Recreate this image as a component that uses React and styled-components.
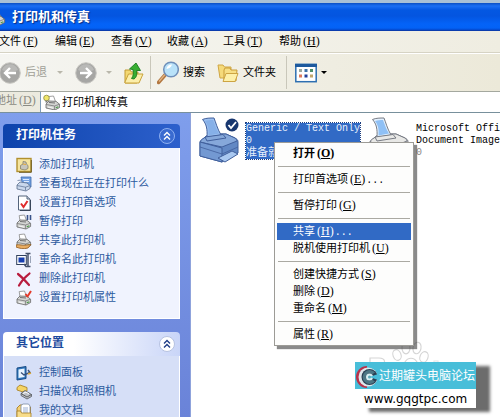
import React from "react";
import styled, { createGlobalStyle, css } from "styled-components";

const Global = createGlobalStyle`
  * { box-sizing: border-box; }
  html, body { margin: 0; overflow: hidden; }
  body, button, input {
    font-family: "Liberation Mono", "Noto Sans CJK SC", monospace;
    font-size: 11px;
    line-height: 16px;
    color: #000;
  }
  button { border: 0; padding: 0; margin: 0; background: none; white-space: nowrap; }
  svg { display: block; flex: none; }
`;

/* ---------- window frame ---------- */

const Window = styled.main`
  height: 100vh;
  display: flex;
  flex-direction: column;
  overflow: hidden;
  border-top: 3px solid #a9c2d6;
  background: #fff;
`;

const TitleBar = styled.header`
  flex: none;
  height: 28px;
  display: flex;
  align-items: center;
  gap: 6px;
  padding-top: 2px;
  overflow: hidden;
  border-bottom: 1px solid #0a3cae;
  background: linear-gradient(#0a50c4 0, #1a70f4 3px, #0458e2 7px, #0455e0 13px, #0463f8 21px, #0362f6 25px, #0448cc 27px);
`;

const TitleIcon = styled.span`
  margin-left: -10px;
`;

const Title = styled.h1`
  margin: 0;
  color: #fff;
  font-size: 13px;
  line-height: 20px;
  font-weight: 700;
  text-shadow: 1px 1px 1px #0b2d80;
`;

const MenuBar = styled.nav`
  flex: none;
  height: 22px;
  display: flex;
  overflow: hidden;
  margin-left: -9px;
  border-bottom: 1px solid #d6d3c4;
  background: linear-gradient(90deg, #f6f6f2, #efede1);
`;

const MenuButton = styled.button`
  flex: none;
  min-width: 56px;
  padding: 0 0 0 8px;
  text-align: left;
`;

const Key = styled.span`
  margin-left: 2px;
  font-family: "Liberation Serif", serif;
  font-size: 12px;
  line-height: 12px;
`;

const Dots = styled.span`
  margin-left: 1px;
  font-size: 10px;
`;

const ToolBar = styled.div`
  flex: none;
  height: 39px;
  display: flex;
  align-items: center;
  padding: 1px 0;
  border-top: 1px solid #fff;
  border-bottom: 1px solid #a4a89f;
  background: linear-gradient(90deg, #f5f5f1, #ece9d9);
`;

const ToolGroup = styled.div`
  height: 33px;
  display: flex;
  flex: none;
  align-items: center;
  gap: 12px;
  padding: 0 ${(p) => p.$end}px 0 ${(p) => p.$start}px;
  margin-left: ${(p) => (p.$clipped ? "-1px" : "0")};
  border-right: ${(p) => (p.$last ? "0" : "1px solid #c9c7ba")};
`;

const ToolButton = styled.button`
  display: flex;
  align-items: center;
  gap: 4px;
  color: ${(p) => (p.disabled ? "#a09f97" : "#000")};
`;

const Caret = styled.span`
  margin-left: ${(p) => p.$gap}px;
  border: 3px solid transparent;
  border-bottom: 0;
  border-top-color: ${(p) => (p.$dim ? "#b9b7ab" : "#000")};
`;

const AddressBar = styled.div`
  flex: none;
  height: 21px;
  display: flex;
  align-items: stretch;
  border-bottom: 1px solid #78909c;
  background: #eceadf;
`;

const AddressLabel = styled.label`
  flex: none;
  margin-left: -5px;
  width: 45px;
  line-height: 19px;
  color: #8b8a82;
`;

const AddressField = styled.div`
  flex: 1;
  min-width: 0;
  display: flex;
  align-items: center;
  gap: 2px;
  padding-left: 2px;
  border-left: 1px solid #7f9db9;
  background: #fff;
`;

const AddressInput = styled.input`
  flex: 1;
  min-width: 0;
  border: 0;
  padding: 1px 0 0;
  outline: 0;
  background: transparent;
`;

const Content = styled.div`
  flex: 1;
  min-height: 0;
  display: flex;
`;

/* ---------- task pane ---------- */

const Sidebar = styled.aside`
  flex: none;
  width: 191px;
  padding: 11px 10px 0 3px;
  overflow: hidden;
  display: flex;
  flex-direction: column;
  gap: 13px;
  border-right: 1px solid #8fa3dc;
  background: linear-gradient(#7f9eec, #6a83d8);
`;

const Card = styled.section`
  flex: none;
  border-radius: 4px 4px 0 0;
  overflow: hidden;
`;

const CardHeader = styled.button`
  width: 100%;
  height: 24px;
  display: flex;
  align-items: center;
  justify-content: space-between;
  padding: 0 4px 0 13px;
  font-size: 12px;
  font-weight: 700;
  ${(p) =>
    p.$primary
      ? css`
          color: #fff;
          background: linear-gradient(90deg, #0d43ac, #2d60cc);
        `
      : css`
          color: #1c4a9e;
          background: linear-gradient(90deg, #fff 40%, #c9d5f8);
        `}
`;

const TaskList = styled.ul`
  list-style: none;
  margin: 0;
  padding: 7px 12px 11px;
  border: 1px solid #fff;
  border-width: 0 1px 1px;
  background: ${(p) => (p.$primary ? "#f0f3fe" : "#d6dff7")};
`;

const TaskLink = styled.a`
  height: 19px;
  display: flex;
  align-items: center;
  gap: 7px;
  color: #2c5a9e;
  text-decoration: none;
  white-space: nowrap;
`;

/* ---------- printers ---------- */

const Files = styled.section`
  position: relative;
  flex: 1;
  min-width: 0;
  display: flex;
  align-items: flex-start;
  padding: 4px 0 0 8px;
  background: #fff;
`;

const Printer = styled.button`
  flex: none;
  width: 170px;
  display: flex;
  align-items: flex-start;
  gap: 7px;
  text-align: left;
`;

const PrinterLabel = styled.span`
  display: block;
  margin-top: 6px;
  font-size: 10px;
  line-height: 12px;
  white-space: nowrap;
  ${(p) =>
    p.$selected &&
    css`
      color: #e6effc;
      background: #316ac5;
      outline: 1px dotted #1d3f80;
    `}
`;

const Line = styled.span`
  display: block;
  color: ${(p) => (p.$dim ? "#8a8a8a" : "inherit")};
  font-size: ${(p) => (p.$wide ? "11px" : "10px")};
`;

const ContextMenu = styled.div`
  position: absolute;
  left: 83px;
  top: 29px;
  width: 140px;
  padding: 2px;
  border: 1px solid #9c9b96;
  background: #fdfdfc;
  box-shadow: 3px 3px 1px rgba(60, 60, 60, 0.6);
`;

const ContextItem = styled.button`
  display: block;
  width: 100%;
  height: 17px;
  padding: 1px 0 0 16px;
  text-align: left;
  line-height: 16px;
  font-weight: ${(p) => (p.$bold ? 700 : 400)};
  color: ${(p) => (p.$active ? "#fff" : "#000")};
  background: ${(p) => (p.$active ? "#316ac5" : "transparent")};
`;

const Divider = styled.hr`
  height: 1px;
  margin: 4px 1px;
  border: 0;
  background: #aaa9a2;
`;

/* ---------- watermark ---------- */

const PawMark = styled.div`
  position: absolute;
  right: 16px;
  bottom: 42px;
`;

const Stamp = styled.aside`
  position: absolute;
  right: 24px;
  bottom: 9px;
  width: 121px;
  background: #fff;
  box-shadow: 14px 4px 3px #6c6c6c;
`;

const StampTitle = styled.div`
  height: 27px;
  display: flex;
  align-items: center;
  gap: 1px;
  padding: 3px 0 0 1px;
  font-size: 12px;
  color: #fff;
  background: #48bed9;
  white-space: nowrap;
`;

const StampUrl = styled.div`
  height: 19px;
  text-align: center;
  font: 12px/20px "DejaVu Sans", sans-serif;
`;

/* ---------- drawings ---------- */

const PrinterBody = ({ hand, tick, doc }) => (
  <g strokeLinejoin="round" strokeWidth=".8">
    <path d="M4 7 3.2 1.6 8.5 1l2 5.6z" fill="#fff" stroke="#888" />
    <path d="m1 9 3-3 7 .3 3.6 3v3.2L10 15 1 13z" fill="#d4d5d3" stroke="#666" />
    <path d="M1 9.5 9.6 11l5-1.8M9.6 11v4" fill="none" stroke="#777" />
    <path d="m4 7.5 6 .5" stroke="#555" />
    <path d="m3 12 5 1.2" stroke="#fff" />
    <path d="m10.8 12.8 2.6-1" stroke="#4a9a48" strokeWidth="1.2" />
    {hand && <path d="M0 12c4-1 6 1 10 0l5-.5-3 3.5c-5 1.3-8 .5-12-1z" fill="#e9ad62" stroke="#8e5a22" />}
    {tick && <path d="m9.5 4 2 2.5L15 1" fill="none" stroke="#e33b2a" strokeWidth="2" />}
    {doc && <path d="M11.5 1v5M14.5 1v5" stroke="#38528a" strokeWidth="1.6" />}
  </g>
);

const taskArt = {
  add: (
    <>
      <rect x="1" y="1.5" width="14" height="13" fill="#f5e4a0" stroke="#b1902f" strokeWidth="1.4" />
      <path d="M15.3 3v12.3H3" fill="none" stroke="#6d5a20" />
      <path d="M4.5 8.5 7 7V4.5l3 .5.3 2L12 8.5v3L9 13l-4.500-1z" fill="#c6c5bd" stroke="#85806a" strokeWidth=".8" />
      <path d="m7 7 3 .5" stroke="#e8a832" />
    </>
  ),
  view: (
    <>
      <path d="M5 1h10v10H7z" fill="#75a2e2" stroke="#3e6bad" strokeWidth=".8" />
      <path d="M7 3.500h6M8 5.500h5" stroke="#dbe9ff" />
      <path d="m1 9 3-3 7 1 3 2.500v3L10 15l-9-2z" fill="#c9d7ec" stroke="#5c6f8d" strokeWidth=".8" />
      <path d="m1.500 4.500 4-.5M1 9.500l8.500 1.700 4-1.500M9.500 11v3.500" fill="none" stroke="#66789a" strokeWidth=".8" />
    </>
  ),
  prefs: (
    <>
      <path d="M2.500 1h8.500l3 3v11h-11.500z" fill="#fff" stroke="#54647c" />
      <path d="M11 1v3h3" fill="#c7d2e2" stroke="#54647c" />
      <path d="M14.500 5v10.500H4" fill="none" stroke="#39465a" />
      <path d="m5 8.500 2.500 3.500L11.500 6" fill="none" stroke="#df2b2b" strokeWidth="2" />
    </>
  ),
  pause: <PrinterBody doc />,
  share: <PrinterBody hand />,
  rename: (
    <>
      <rect x=".7" y="3.500" width="9.600" height="9" fill="#fff" stroke="#31415e" />
      <rect x="2.500" y="5.500" width="6" height="5" fill="#173fb0" />
      <path d="M9.500 1.500h5M12 2v12M9.500 14.500h5M8 12l2 2.500" fill="none" stroke="#44506a" strokeWidth="1.500" />
      <path d="M14.500 4v7" stroke="#9aa4b8" />
    </>
  ),
  remove: <path d="M2 3c4 3 7 6.500 11 11M13.500 2.500C9 6 5.500 10 3 14.500" fill="none" stroke="#b81c3e" strokeWidth="2.200" strokeLinecap="round" />,
  props: <PrinterBody tick />,
  panel: (
    <>
      <path d="M1 3 10 1.500v12L1 15z" fill="#3178bd" stroke="#174a84" />
      <path d="m2.500 4.500 6-.9v8.400l-6 1z" fill="#e8f4ff" />
      <path d="m5 7.500 3 2.500 6-2.500-2-2.500" fill="none" stroke="#38517a" strokeWidth="1.400" />
      <path d="m12 9 3-1" stroke="#e0aa36" strokeWidth="1.500" />
    </>
  ),
  scanner: (
    <>
      <path d="M1 3.500 4 1l7 2.500V7L7 8 1 6z" fill="#f5d465" stroke="#a37a1c" strokeWidth=".8" />
      <path d="m5 9.500 4-3 6.500 4v2L11 15l-6-3.500z" fill="#bdc1c7" stroke="#50555d" strokeWidth=".8" />
      <path d="m5 9.500 6 3.500 4.500-2.500" fill="none" stroke="#444" strokeWidth=".8" />
      <path d="m7 9.500 3-1.500 3 2" stroke="#fff" fill="none" />
    </>
  ),
  docs: (
    <>
      <path d="M1 5 4 2h3l1 2h6.500v11H1z" fill="#f3d074" stroke="#a77d24" strokeWidth=".9" />
      <path d="M5 2.500 7 1h5.500L14 3v10H5z" fill="#fff" stroke="#798aa6" strokeWidth=".8" />
      <path d="M7 5h5M7 7h5M7 9h5" stroke="#8fa6cf" strokeWidth=".9" />
      <path d="M1 8h3.500l1 2H15v5.500H1z" fill="#f7dc8b" stroke="#a77d24" strokeWidth=".8" />
    </>
  ),
};

const TaskIcon = ({ name }) => (
  <svg width="16" height="16" viewBox="0 0 16 16" aria-hidden="true">
    {taskArt[name]}
  </svg>
);

const SmallPrinter = () => (
  <svg width="16" height="16" viewBox="0 0 16 16" aria-hidden="true">
    <PrinterBody />
  </svg>
);

const AddressPrinter = () => (
  <svg width="17" height="16" viewBox="0 0 17 16" aria-hidden="true">
    <g transform="translate(2 1)">
      <PrinterBody />
    </g>
    <circle cx="3.500" cy="4" r="2.800" fill="#f1e76a" stroke="#8e8a3e" strokeWidth=".8" />
    <path d="M2.500 6.500h2v2h-2z" fill="#777" />
  </svg>
);

const NavArrow = ({ forward }) => (
  <svg width="22" height="22" viewBox="0 0 22 22" aria-hidden="true">
    <circle cx="11" cy="11" r="10.300" fill="#a6a6a4" stroke="#c7c6c1" />
    <path d="M3 8a8.500 8.500 0 0 1 16 0C14 10 8 10 3 8z" fill="#b9b9b7" />
    <path
      d={forward ? "M5 11h10M11 6l5 5-5 5" : "M17 11H7M11 6l-5 5 5 5"}
      fill="none"
      stroke="#fff"
      strokeWidth="2.400"
    />
  </svg>
);

const UpFolder = () => (
  <svg width="20" height="22" viewBox="0 0 20 22" aria-hidden="true">
    <path d="M1 8h5l1.500 2H14l-1 11H1z" fill="#f3d873" stroke="#c19a32" />
    <path d="m1 20 3.500-8H19l-4 9H1z" fill="#fbeeaa" stroke="#c9a33b" />
    <path d="M10 17c3-2 3-5 2.500-8.500H16.500L12 1 5.500 7l3.500 .5c.6 4 .5 6.500-1.500 9z" fill="#38ae32" stroke="#177b1c" strokeWidth=".9" />
  </svg>
);

const Magnifier = () => (
  <svg width="22" height="24" viewBox="0 0 22 24" aria-hidden="true">
    <path d="m8.500 13.500-7 8" stroke="#b2763f" strokeWidth="3.500" strokeLinecap="round" />
    <path d="m8 13.500-6 7" stroke="#e3b583" strokeWidth="1.200" />
    <circle cx="14" cy="8.500" r="7.300" fill="#b9e2f9" stroke="#7090ba" strokeWidth="1.500" />
    <path d="M9.500 8A5 5 0 0 1 15 3.500c-1 3-3 4-5.500 4.500z" fill="#fff" />
  </svg>
);

const Folders = () => (
  <svg width="22" height="20" viewBox="0 0 22 20" aria-hidden="true">
    <path d="M1 2h5l1.500 2H14v11H3z" fill="#f5da7a" stroke="#cfa644" />
    <path d="m7 7 1-2h5l1 2h6l-1 11H7z" fill="#f7df85" stroke="#c99d38" />
    <path d="m6 18.500 3-8h12l-3 8z" fill="#fdf0a9" stroke="#cda442" />
  </svg>
);

const ViewsIcon = () => (
  <svg width="22" height="20" viewBox="0 0 22 20" aria-hidden="true">
    <rect x=".8" y="1.300" width="20.400" height="17.400" fill="#fff" stroke="#2d6fb1" strokeWidth="1.500" />
    <path d="M0 2.500h22" stroke="#1d5a9e" strokeWidth="3" />
    {[
      [4, 6, "#9aa89d"], [9.5, 6, "#3f74a8"], [15, 6, "#4e8f68"],
      [4, 11.5, "#e07a5a"], [9.5, 11.5, "#223f9a"], [15, 11.5, "#c1a66a"],
    ].map(([x, y, c]) => (
      <rect key={`${x}-${y}`} x={x} y={y} width="3" height="3" fill={c} />
    ))}
  </svg>
);

const Chevron = ({ primary }) => (
  <svg width="18" height="18" viewBox="0 0 18 18" aria-hidden="true">
    <circle cx="9" cy="9" r="7.500" fill={primary ? "#3a6bd0" : "#fff"} stroke={primary ? "#8fb0f0" : "#b6c2e0"} />
    <path d="m6 8.500 3-3 3 3M6 12.500l3-3 3 3" fill="none" stroke={primary ? "#fff" : "#1f3d86"} strokeWidth="1.400" />
  </svg>
);

const BigPrinter = ({ selected }) => {
  const c = selected
    ? { line: "#41609c", paper: "#86b0e8", paper2: "#9cc0f0", top: "#86a8da", side: "#6288c4", front: "#7399d2", tray: "#a9c8f0" }
    : { line: "#777b84", paper: "#8fc0f5", paper2: "#e3f1ff", top: "#e8e8e6", side: "#c8c8c6", front: "#d9d9d7", tray: "#f6f6f6" };
  return (
    <svg width="40" height="48" viewBox="0 0 40 48" aria-hidden="true">
      <g stroke={c.line} strokeLinejoin="round">
        <path d="M1 26c0-2 1-3 3-4l6-5h17l9 4c2 1 3 2 3 4v11l-16 9L1 39z" fill={c.side} />
        <path d="M1 25c1-2 2-3 4-4l5-4h17l9 4c1 1 2 2 2 3l-15 6z" fill={c.top} />
        <path d="m1 25 22 6v14L1 39z" fill={c.front} />
        <path d="M3.500 2.500C7 1 11 1 15 1c2 5 3 10 7 17L8 20.500C8.500 12 7.500 7 3.500 2.500z" fill={c.paper2} />
        <path d="M6 4c3-1 5-1 8-1 2 5 3 9 6 13.500L9.500 18.500C10 12 9 8 6 4z" fill={c.paper} stroke="none" />
        <path d="m6 20 18-2.500 3 3.500-19 3z" fill={c.top} />
        <path d="m1 30 22 7 16-7" fill="none" strokeWidth=".8" />
        <path d="m19 41 14-7 6 3-13 8z" fill={c.tray} />
      </g>
      {selected && (
        <>
          <circle cx="33" cy="8" r="6.500" fill="#17366f" />
          <path d="m29.500 8 2.500 3 5-6" fill="none" stroke="#fff" strokeWidth="1.800" />
        </>
      )}
    </svg>
  );
};

const Paw = () => (
  <svg width="116" height="34" viewBox="0 0 116 34" aria-hidden="true">
    <g fill="#fff" stroke="#d5d5d5" strokeWidth="1.200">
      <path d="M2 32V17h9c7 0 7 6 2 7 7 1 5 8-1 8M20 32c-3-4 0-8 5-8h6v8" />
      <ellipse cx="29" cy="14" rx="4" ry="5.500" transform="rotate(-20 29 14)" />
      <ellipse cx="38" cy="7" rx="4" ry="5.800" />
      <ellipse cx="49" cy="7" rx="4" ry="5.800" transform="rotate(12 49 7)" />
      <ellipse cx="56" cy="16" rx="4" ry="5.500" transform="rotate(20 56 16)" />
      <path d="M28 32c2-5 7-7 9-11 3-5 9-5 12 0 2 4 8 6 9 11" />
      <path d="M66 32V20h4v12M76 32V22h10v10M92 32V22h14v10" stroke="#e6e6e6" />
    </g>
  </svg>
);

const StampLogo = () => (
  <svg width="22" height="22" viewBox="0 0 22 22" aria-hidden="true">
    <path d="M11 0a11 11 0 0 0 0 22z" fill="#b9324a" />
    <circle cx="12" cy="11" r="9.500" fill="#dfe8ec" />
    <circle cx="13.500" cy="11" r="8" fill="#2a3f52" />
    <path d="M19 6.500a7 7 0 1 0 0 9l-3-2a3.500 3.500 0 1 1 0-5z" fill="#4d7684" />
    <circle cx="13.500" cy="11" r="3.500" fill="#d8eff2" />
    <path d="M13.500 11 22 8v6z" fill="#48bed9" />
    <circle cx="13.500" cy="11" r="1.500" fill="#5aa9b8" />
  </svg>
);

/* ---------- data ---------- */

const menus = [["文件", "F"], ["编辑", "E"], ["查看", "V"], ["收藏", "A"], ["工具", "T"], ["帮助", "H"]];

const printerTasks = [
  ["add", "添加打印机"],
  ["view", "查看现在正在打印什么"],
  ["prefs", "设置打印首选项"],
  ["pause", "暂停打印"],
  ["share", "共享此打印机"],
  ["rename", "重命名此打印机"],
  ["remove", "删除此打印机"],
  ["props", "设置打印机属性"],
];

const places = [["panel", "控制面板"], ["scanner", "扫描仪和照相机"], ["docs", "我的文档"]];

const contextGroups = [
  [{ text: "打开", k: "O", bold: true }],
  [{ text: "打印首选项", k: "E", more: true }],
  [{ text: "暂停打印", k: "G" }],
  [{ text: "共享", k: "H", more: true, active: true }, { text: "脱机使用打印机", k: "U" }],
  [{ text: "创建快捷方式", k: "S" }, { text: "删除", k: "D" }, { text: "重命名", k: "M" }],
  [{ text: "属性", k: "R" }],
];

const Access = ({ k, more }) => (
  <>
    <Key>
      (<u>{k}</u>)
    </Key>
    {more && <Dots>...</Dots>}
  </>
);

const TaskCard = ({ title, items, primary }) => (
  <Card>
    <CardHeader type="button" $primary={primary} aria-expanded="true">
      {title}
      <Chevron primary={primary} />
    </CardHeader>
    <TaskList $primary={primary}>
      {items.map(([icon, text]) => (
        <li key={icon}>
          <TaskLink href="#">
            <TaskIcon name={icon} />
            {text}
          </TaskLink>
        </li>
      ))}
    </TaskList>
  </Card>
);

export default function App() {
  return (
    <>
      <Global />
      <Window>
        <TitleBar>
          <TitleIcon><SmallPrinter /></TitleIcon>
          <Title>打印机和传真</Title>
        </TitleBar>
        <MenuBar>
          {menus.map(([text, k]) => (
            <MenuButton type="button" key={k}>
              {text}
              <Access k={k} />
            </MenuButton>
          ))}
        </MenuBar>
        <ToolBar>
          <ToolGroup $start={0} $end={6} $clipped>
            <ToolButton type="button" disabled>
              <NavArrow />
              后退
              <Caret $gap={6} $dim />
            </ToolButton>
            <ToolButton type="button" disabled aria-label="前进">
              <NavArrow forward />
              <Caret $gap={5} $dim />
            </ToolButton>
            <ToolButton type="button" aria-label="向上"><UpFolder /></ToolButton>
          </ToolGroup>
          <ToolGroup $start={6} $end={10}>
            <ToolButton type="button"><Magnifier />搜索</ToolButton>
            <ToolButton type="button"><Folders />文件夹</ToolButton>
          </ToolGroup>
          <ToolGroup $start={8} $end={0} $last>
            <ToolButton type="button" aria-label="查看方式">
              <ViewsIcon />
              <Caret $gap={0} />
            </ToolButton>
          </ToolGroup>
        </ToolBar>
        <AddressBar>
          <AddressLabel htmlFor="address">地址<Access k="D" /></AddressLabel>
          <AddressField>
            <AddressPrinter />
            <AddressInput id="address" defaultValue="打印机和传真" />
          </AddressField>
        </AddressBar>
        <Content>
          <Sidebar>
            <TaskCard title="打印机任务" items={printerTasks} primary />
            <TaskCard title="其它位置" items={places} />
          </Sidebar>
          <Files>
            <Printer type="button">
              <BigPrinter selected />
              <PrinterLabel $selected>
                <Line>Generic / Text Only</Line>
                <Line>0</Line>
                <Line $wide>准备就绪</Line>
              </PrinterLabel>
            </Printer>
            <Printer type="button">
              <BigPrinter />
              <PrinterLabel>
                <Line>Microsoft Offi</Line>
                <Line>Document Image</Line>
                <Line $dim>0</Line>
              </PrinterLabel>
            </Printer>
            <PawMark><Paw /></PawMark>
            <ContextMenu role="menu">
              {contextGroups.map((group, i) => (
                <React.Fragment key={group[0].k}>
                  {i > 0 && <Divider />}
                  {group.map((item) => (
                    <ContextItem type="button" role="menuitem" key={item.k} $bold={item.bold} $active={item.active}>
                      {item.text}
                      <Access k={item.k} more={item.more} />
                    </ContextItem>
                  ))}
                </React.Fragment>
              ))}
            </ContextMenu>
            <Stamp>
              <StampTitle><StampLogo />过期罐头电脑论坛</StampTitle>
              <StampUrl>www.gqgtpc.com</StampUrl>
            </Stamp>
          </Files>
        </Content>
      </Window>
    </>
  );
}
